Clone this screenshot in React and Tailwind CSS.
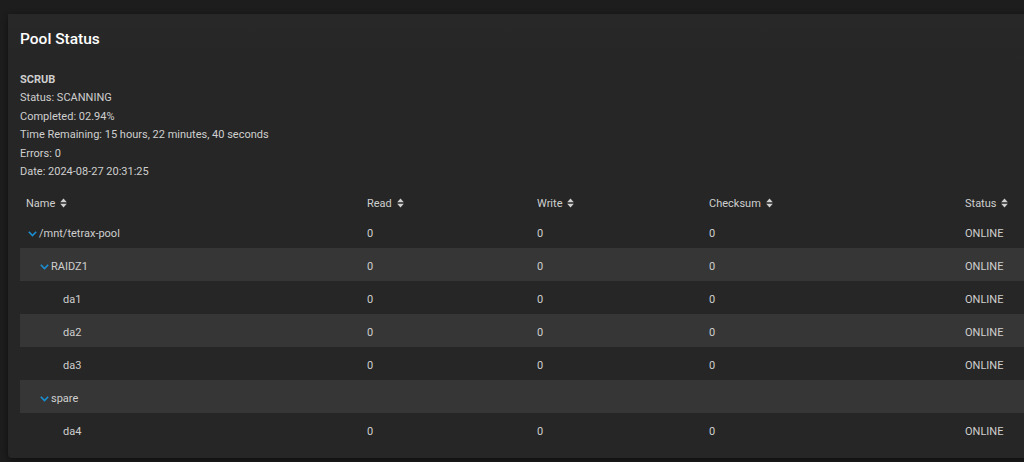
import React from "react";

const Sort = () => (
  <svg width="7" height="10" viewBox="0 0 7 10" className="inline-block ml-[5px] -mt-[1px]">
    <path d="M3.5 0.5 L6.8 4.2 H0.2 Z" fill="#d0d0d0" />
    <path d="M3.5 9.5 L6.8 5.8 H0.2 Z" fill="#d0d0d0" />
  </svg>
);

const Chevron = () => (
  <svg width="9" height="6" viewBox="0 0 9 6" className="mr-[2px] shrink-0">
    <path d="M0.8 0.8 L4.5 4.6 L8.2 0.8" stroke="#1a8fd4" strokeWidth="1.6" fill="none" />
  </svg>
);

const rows = [
  { name: "/mnt/tetrax-pool", level: 0, expand: true, vals: ["0", "0", "0", "ONLINE"] },
  { name: "RAIDZ1", level: 1, expand: true, vals: ["0", "0", "0", "ONLINE"] },
  { name: "da1", level: 2, vals: ["0", "0", "0", "ONLINE"] },
  { name: "da2", level: 2, vals: ["0", "0", "0", "ONLINE"] },
  { name: "da3", level: 2, vals: ["0", "0", "0", "ONLINE"] },
  { name: "spare", level: 1, expand: true, vals: ["", "", "", ""] },
  { name: "da4", level: 2, vals: ["0", "0", "0", "ONLINE"] },
];

const cols = "grid grid-cols-[341px_170px_172px_1fr_59px] items-center";

export default function App() {
  return (
    <div
      className="w-[1024px] h-[462px] overflow-hidden bg-[#1d1d1d] pt-[14px] pl-[8px]"
      style={{ fontFamily: "Roboto, 'Liberation Sans', sans-serif" }}
    >
      <div className="w-[1040px] h-[444px] bg-[#262626] rounded-[4px] shadow-[0_2px_6px_rgba(0,0,0,0.5)]">
        <div className="h-[50px] flex items-center pl-[12px] pt-[2px] text-[15.5px] font-medium text-white bg-gradient-to-b from-[#282828] to-[#262626]">
          Pool Status
        </div>
        <div className="pl-[12px] pt-[7px] text-[11px] leading-[18.4px] text-[#cfcfcf]">
          <div className="font-bold">SCRUB</div>
          <div>Status: SCANNING</div>
          <div>Completed: 02.94%</div>
          <div>Time Remaining: 15 hours, 22 minutes, 40 seconds</div>
          <div>Errors: 0</div>
          <div>Date: 2024-08-27 20:31:25</div>
        </div>
        <div className="ml-[12px] mt-[8px] w-[1004px] text-[11px] text-[#cfcfcf]">
          <div className={`${cols} h-[26px] pl-[6px] pt-[3px]`}>
            <div>Name<Sort /></div>
            <div>Read<Sort /></div>
            <div>Write<Sort /></div>
            <div>Checksum<Sort /></div>
            <div className="pr-[21px] whitespace-nowrap">Status<Sort /></div>
          </div>
          {rows.map((r, i) => (
            <div
              key={i}
              className={`${cols} h-[33px] pl-[6px] pt-[4px] ${i % 2 === 1 ? "bg-[#363636]" : ""}`}
            >
              <div className="flex items-center" style={{ paddingLeft: r.level * 12 + 2 }}>
                {r.expand ? <Chevron /> : <span className="w-[11px] shrink-0" />}
                <span>{r.name}</span>
              </div>
              <div>{r.vals[0]}</div>
              <div>{r.vals[1]}</div>
              <div>{r.vals[2]}</div>
              <div className="pr-[21px]">{r.vals[3]}</div>
            </div>
          ))}
        </div>
      </div>
    </div>
  );
}
